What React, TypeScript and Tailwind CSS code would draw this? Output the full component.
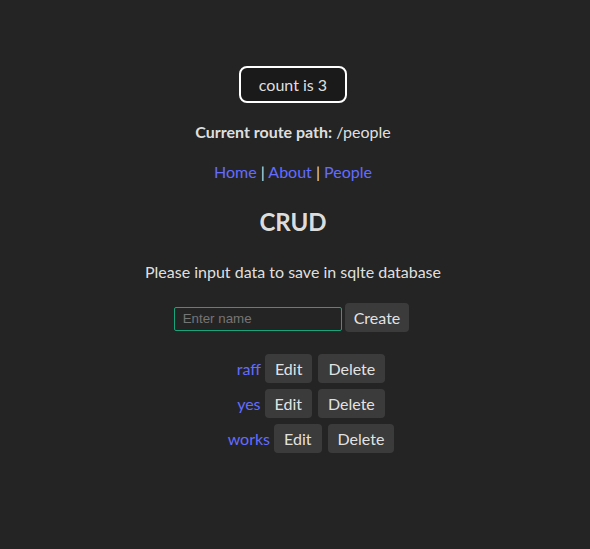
export default function App() {
  const items = ["raff", "yes", "works"];
  return (
    <div
      className="min-h-screen bg-[#242424] text-[rgba(255,255,255,0.87)] flex flex-col items-center pt-[66px] pr-[4px] text-[16px] leading-[24px]"
      style={{ fontFamily: "Lato, 'Noto Sans', sans-serif" }}
    >
      <button className="h-[37px] w-[108px] rounded-lg border-2 border-white bg-[#1a1a1a] text-[16px]">
        count is 3
      </button>
      <p className="mt-[17px]">
        <b>Current route path:</b> /people
      </p>
      <nav className="mt-[16px]">
        <a className="text-[#646cff]" href="#">Home</a> |{" "}
        <a className="text-[#646cff]" href="#">About</a> |{" "}
        <a className="text-[#646cff]" href="#">People</a>
      </nav>
      <h2 className="mt-[23px] text-[24px] leading-[30px] font-bold">CRUD</h2>
      <p className="mt-[23px]">Please input data to save in sqlte database</p>
      <div className="mt-[19px] mr-[3px] flex items-center gap-[3px]">
        <input
          placeholder="Enter name"
          className="mt-[2px] h-[24px] w-[168px] rounded-[2px] border border-[#19a57a] bg-transparent px-[8px] text-[13.33px] placeholder:text-[#757575] outline-none"
          style={{ fontFamily: "'Liberation Sans', Arial, sans-serif" }}
        />
        <button className="h-[29px] px-[9px] rounded-[4px] bg-[#3b3b3b]">Create</button>
      </div>
      <ul className="mt-[22px] pl-9 flex flex-col gap-[6px] items-center">
        {items.map((it) => (
          <li key={it} className="flex items-center">
            <span className="text-[#646cff] mr-[4px]">{it}</span>
            <button className="h-[29px] px-[10px] rounded-[4px] bg-[#3b3b3b]">Edit</button>
            <button className="h-[29px] px-[10px] ml-[6px] rounded-[4px] bg-[#3b3b3b]">Delete</button>
          </li>
        ))}
      </ul>
    </div>
  );
}
